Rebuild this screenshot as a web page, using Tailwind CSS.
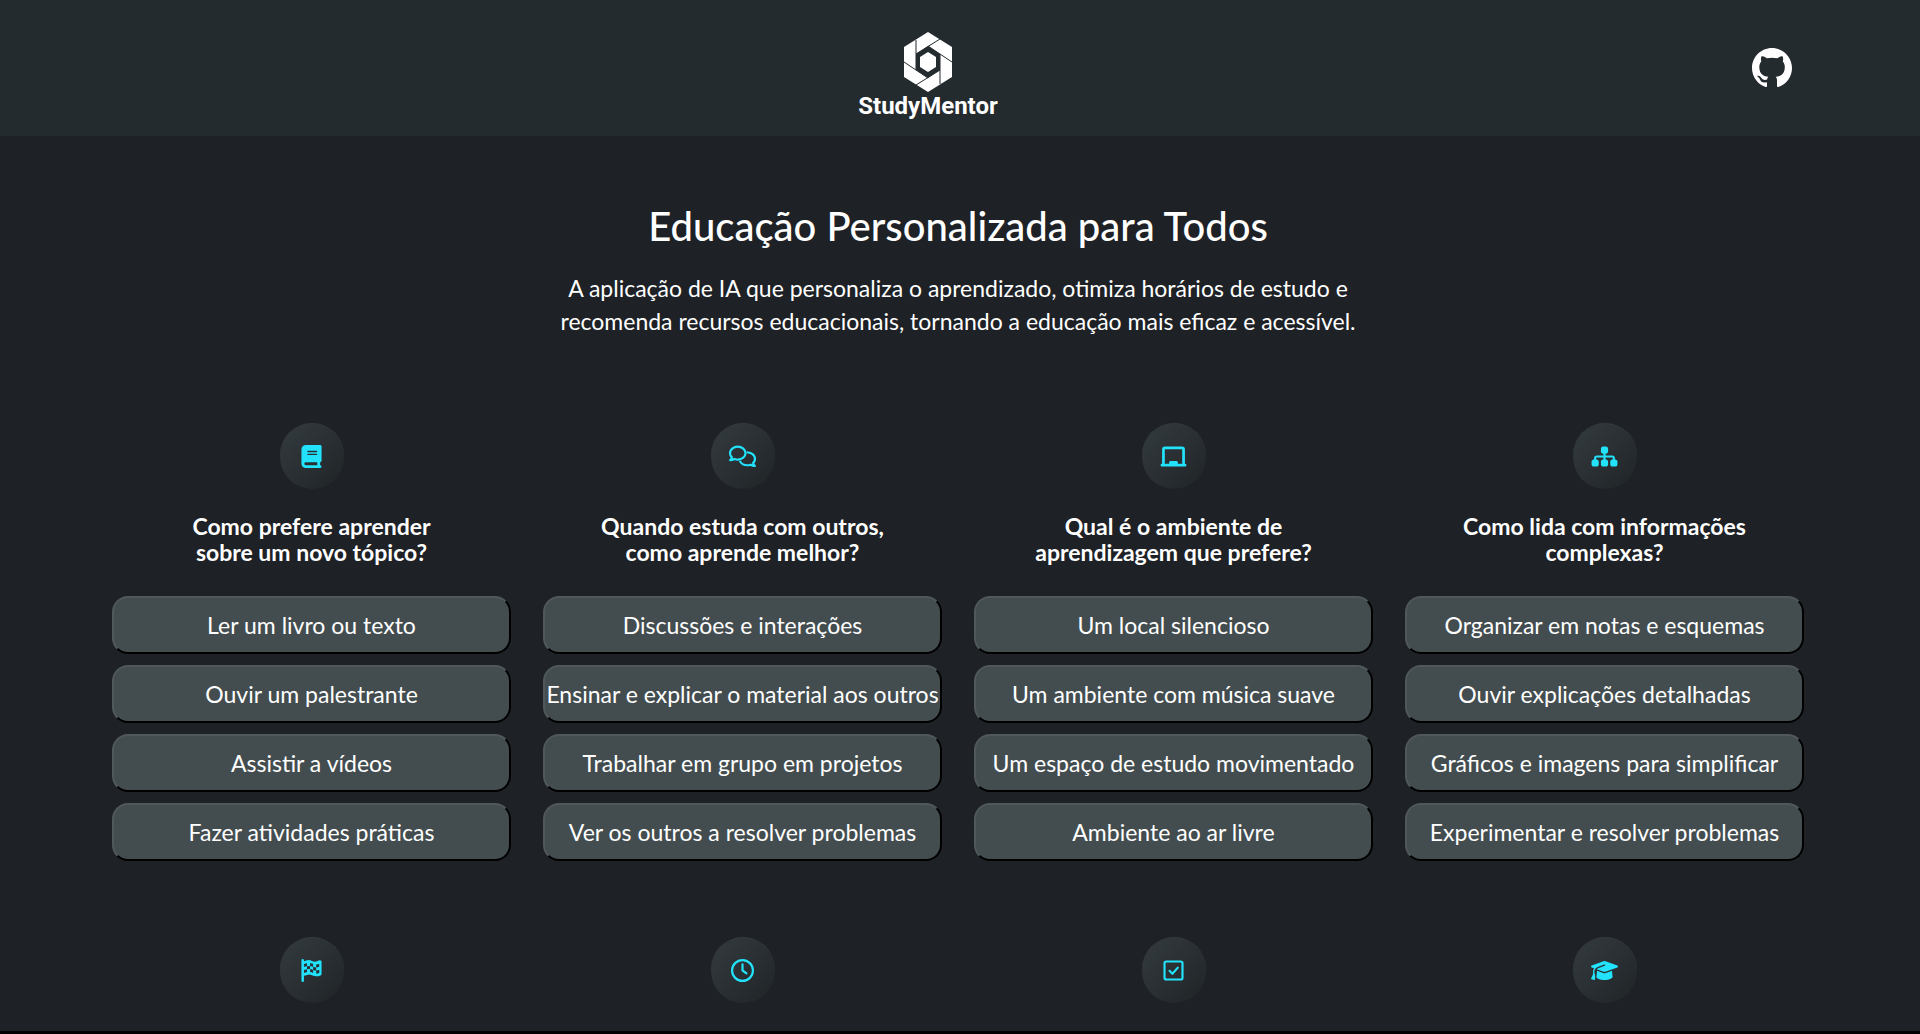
<!DOCTYPE html>
<html lang="pt">
<head>
<meta charset="utf-8">
<title>StudyMentor</title>
<script src="https://cdn.jsdelivr.net/npm/@tailwindcss/browser@4"></script>
</head>
<body class="h-screen overflow-hidden border-b-3 border-black bg-[#1e2125] font-['Lato',sans-serif] text-white">
<header class="grid h-34 grid-cols-3 items-center bg-[#242b2e] pr-32 pl-16">
  <a href="#" class="col-start-2 flex w-37 flex-col items-center justify-self-center pt-4">
    <svg class="h-15 w-12" viewBox="0 0 48 60"><path fill="#fff" d="M24 0 48 15V45L24 60 0 45V15Z"/><path fill="#242b2e" d="M24 14 36 22V38L24 46 12 38V22Z"/><path fill="#fff" d="M24 20 32 25V35L24 40 16 35V25Z"/><path stroke="#242b2e" d="M12 38V8M12 22 36 7M24 14 48 30M36 22V52M36 38 12 53M24 46 0 30"/></svg>
    <span class="font-['Roboto',sans-serif] text-2xl leading-7 font-bold">StudyMentor</span>
  </a>
  <a href="#" aria-label="GitHub" class="justify-self-end"><svg class="size-10" viewBox="0 0 16 16" fill="#fff"><path d="M8 0C3.58 0 0 3.58 0 8c0 3.54 2.29 6.53 5.47 7.59.4.07.55-.17.55-.38 0-.19-.01-.82-.01-1.49-2.01.37-2.53-.49-2.69-.94-.09-.23-.48-.94-.82-1.13-.28-.15-.68-.52-.01-.53.63-.01 1.08.58 1.23.82.72 1.21 1.87.87 2.33.66.07-.52.28-.87.51-1.07-1.78-.2-3.64-.89-3.64-3.95 0-.87.31-1.59.82-2.15-.08-.2-.36-1.02.08-2.12 0 0 .67-.21 2.2.82.64-.18 1.32-.27 2-.27s1.36.09 2 .27c1.53-1.04 2.2-.82 2.2-.82.44 1.1.16 1.92.08 2.12.51.56.82 1.27.82 2.15 0 3.07-1.87 3.75-3.65 3.95.29.25.54.73.54 1.48 0 1.07-.01 1.93-.01 2.2 0 .21.15.46.55.38A8.01 8.01 0 0 0 16 8c0-4.42-3.58-8-8-8"/></svg></a>
</header>
<main class="pr-29 pl-28">
  <section class="pt-16 text-center">
    <h1 class="text-[40px] leading-13 font-medium">Educação Personalizada para Todos</h1>
    <p class="mt-5 text-[23px] leading-[33px]">A aplicação de IA que personaliza o aprendizado, otimiza horários de estudo e<br>recomenda recursos educacionais, tornando a educação mais eficaz e acessível.</p>
  </section>
  <div id="grid" class="mt-[85px] grid grid-cols-4 gap-x-8 gap-y-19"></div>
</main>
<script>
const icons = {
  book: ['0 0 448 512','<path d="M96 0C43 0 0 43 0 96V416c0 53 43 96 96 96H384h32c17.700 0 32-14.300 32-32s-14.300-32-32-32V384c17.700 0 32-14.300 32-32V32c0-17.700-14.300-32-32-32H384 96zm0 384H352v64H96c-17.700 0-32-14.300-32-32s14.300-32 32-32zm32-240c0-8.800 7.200-16 16-16H336c8.800 0 16 7.200 16 16s-7.200 16-16 16H144c-8.800 0-16-7.200-16-16zm16 48H336c8.800 0 16 7.200 16 16s-7.200 16-16 16H144c-8.800 0-16-7.200-16-16s7.200-16 16-16z"/>'],
  comments: ['0 0 640 512','<g fill="none" stroke="currentColor" stroke-width="52" stroke-linejoin="round" stroke-linecap="round"><path d="M208 24c102 0 184 68 184 152s-82 152-184 152c-28 0-55-5-79-15-25 18-60 31-101 31 19-21 34-44 40-68C40 250 24 214 24 176 24 92 106 24 208 24Z"/><path d="M440 156c101 5 176 72 176 156 0 38-16 74-44 100 6 24 21 47 40 68-41 0-76-13-101-31-24 10-51 15-79 15-74 0-137-35-168-88"/></g>'],
  laptop: ['0 0 576 512','<g fill="none" stroke="currentColor" stroke-width="60" stroke-linecap="round"><path d="M64 400V96q0-34 34-34H478q34 0 34 34V400M30 450H546"/></g><path d="M192 450v-60q0-32 32-32h128q32 0 32 32v60Z"/>'],
  sitemap: ['0 0 576 512','<path d="M208 80c0-26.500 21.500-48 48-48h64c26.500 0 48 21.500 48 48v64c0 26.500-21.500 48-48 48h-8v40H464c30.900 0 56 25.100 56 56v32h8c26.500 0 48 21.500 48 48v64c0 26.500-21.500 48-48 48H464c-26.500 0-48-21.500-48-48V368c0-26.500 21.500-48 48-48h8V288c0-4.400-3.600-8-8-8H312v40h8c26.500 0 48 21.500 48 48v64c0 26.500-21.500 48-48 48H256c-26.500 0-48-21.500-48-48V368c0-26.500 21.500-48 48-48h8V280H112c-4.400 0-8 3.600-8 8v32h8c26.500 0 48 21.500 48 48v64c0 26.500-21.500 48-48 48H48c-26.500 0-48-21.500-48-48V368c0-26.500 21.500-48 48-48h8V288c0-30.900 25.100-56 56-56H264V192h-8c-26.500 0-48-21.500-48-48V80z"/>'],
  flag: ['0 0 448 512','<path fill-rule="evenodd" d="M0 28Q4 0 28 0T56 28V48L130 27Q180 16 235 43T342 51L400 29Q448 18 448 62V334Q448 356 425 365 330 408 235 362 180 338 130 354L56 374V484Q54 512 28 512T0 484ZM56 110v65l68-16V95ZM124 159v68q34-8 68-4v-68q-34-4-68 4ZM192 88v67q34 7 68 20v-67q-34-13-68-20ZM260 175v68q34 13 68 13v-67q-34-1-68-14ZM328 120v69q34 0 68-15v-65q-34 12-68 11ZM56 243v68l68-19v-65ZM192 223v68q34 6 68 19v-67q-34-14-68-20ZM328 256v69q34 0 68-14v-69q-34 14-68 14Z"/>'],
  clock: ['0 0 512 512','<g fill="none" stroke="currentColor" stroke-width="48" stroke-linecap="round" stroke-linejoin="round"><circle cx="256" cy="256" r="232"/><path d="M256 120V256l88 62"/></g>'],
  check: ['0 0 448 512','<g fill="none" stroke="currentColor" stroke-width="48" stroke-linecap="round" stroke-linejoin="round"><rect x="24" y="56" width="400" height="400" rx="40"/><path d="m136 264 64 64 120-136"/></g>'],
  cap: ['0 0 640 512','<path d="M320 32c-8.100 0-16.100 1.400-23.700 4.100L15.800 137.400C6.300 140.900 0 149.900 0 160s6.300 19.100 15.800 22.600l57.900 20.900C57.300 229.300 48 259.800 48 291.900v28.100c0 28.400-10.800 57.700-22.300 80.800-6.500 13-13.900 25.800-22.500 37.600C0 442.700-.9 448.300.9 453.400s6 8.900 11.200 10.200l64 16c4.200 1.100 8.700.3 12.400-2s6.300-6.100 7.100-10.400c8.600-42.800 4.300-81.200-2.100-108.700C90.300 344.300 86 329.800 80 316.500V291.900c0-30.200 10.200-58.700 27.900-81.500 12.900-15.500 29.600-28 49.200-35.700l157-61.700c8.200-3.200 17.500.8 20.700 9s-.8 17.500-9 20.700l-157 61.700c-12.400 4.900-23.300 12.400-32.200 21.600l159.600 57.600c7.600 2.700 15.600 4.100 23.700 4.100s16.100-1.400 23.700-4.100L624.200 182.600c9.500-3.400 15.800-12.500 15.800-22.600s-6.300-19.100-15.800-22.600L343.700 36.100C336.100 33.400 328.100 32 320 32zM128 408c0 35.300 86 72 192 72s192-36.700 192-72L496.700 262.600 354.500 314c-11.100 4-22.800 6-34.500 6s-23.500-2-34.500-6L143.300 262.600 128 408z"/>']
};
const cards = [
  ['book','Como prefere aprender<br>sobre um novo tópico?',['Ler um livro ou texto','Ouvir um palestrante','Assistir a vídeos','Fazer atividades práticas']],
  ['comments','Quando estuda com outros,<br>como aprende melhor?',['Discussões e interações','Ensinar e explicar o material aos outros','Trabalhar em grupo em projetos','Ver os outros a resolver problemas']],
  ['laptop','Qual é o ambiente de<br>aprendizagem que prefere?',['Um local silencioso','Um ambiente com música suave','Um espaço de estudo movimentado','Ambiente ao ar livre']],
  ['sitemap','Como lida com informações<br>complexas?',['Organizar em notas e esquemas','Ouvir explicações detalhadas','Gráficos e imagens para simplificar','Experimentar e resolver problemas']],
  ['flag'],['clock'],['check'],['cap']
];
document.getElementById('grid').innerHTML = cards.map(([icon,title,opts]) => `
<section class="flex flex-col items-center text-center">
  <div class="flex h-[66px] w-16 items-center justify-center rounded-full border-t border-[#363b3e] bg-linear-to-br from-[#343b3e] to-[#1f2427] text-[#22e3fb]"><svg class="h-[23px] w-[27px]" viewBox="${icons[icon][0]}" fill="currentColor">${icons[icon][1]}</svg></div>
  ${title ? `<h2 class="mt-6 text-[23px] leading-[26px] font-bold whitespace-nowrap">${title}</h2>
  <div class="mt-[31px] flex w-full flex-col gap-[11px]">${opts.map(o => `<button class="h-[58px] rounded-2xl border-2 border-t-[#50585a] border-r-black border-b-black border-l-[#50585a] bg-[#434d4f] text-[23px] whitespace-nowrap">${o}</button>`).join('')}</div>` : ''}
</section>`).join('');
</script>
</body>
</html>
